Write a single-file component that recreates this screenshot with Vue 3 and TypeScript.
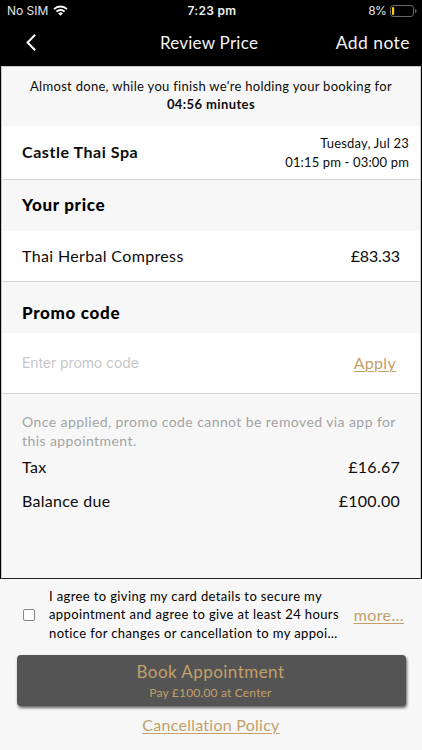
<script setup lang="ts">
import { ref } from 'vue'

interface Line {
  label: string
  amount: string
}

const service: Line = { label: 'Thai Herbal Compress', amount: '£83.33' }
const totals: Line[] = [
  { label: 'Tax', amount: '£16.67' },
  { label: 'Balance due', amount: '£100.00' },
]
const consent: string[] = [
  'I agree to giving my card details to secure my',
  'appointment and agree to give at least 24 hours',
  'notice for changes or cancellation to my appoi…',
]
const promo = ref('')
const agreed = ref(false)
</script>

<template>
  <div class="screen">
    <div class="status">
      <div class="carrier">
        <span>No SIM</span>
        <svg class="wifi" width="15" height="11" viewBox="0 0 15 11" fill="none" stroke="#fff">
          <path d="M1 4.1a9.3 9.3 0 0 1 13 0" stroke-width="2" />
          <path d="M3.4 6.6a5.9 5.9 0 0 1 8.2 0" stroke-width="1.9" />
          <path d="M7.5 10.7 5.2 8.4a3.3 3.3 0 0 1 4.6 0z" fill="#fff" stroke="none" />
        </svg>
      </div>
      <span class="clock">7:23 pm</span>
      <div class="power">
        <span>8%</span>
        <svg width="27" height="12" viewBox="0 0 27 12">
          <rect x="0.5" y="0.5" width="23" height="11" rx="2.6" fill="none" stroke="#68686a" />
          <rect x="2" y="2" width="2.2" height="8" rx="1" fill="#fdcb0a" />
          <path d="M25 4v4c1.1-.4 1.6-1.1 1.6-2S26.1 4.4 25 4z" fill="#68686a" />
        </svg>
      </div>
    </div>

    <header class="nav">
      <button class="back" aria-label="Back">
        <svg width="11" height="17" viewBox="0 0 11 17" fill="none" stroke="#fff" stroke-width="2">
          <path d="M9.1 .8 1.6 8.5l7.5 7.7" />
        </svg>
      </button>
      <h1 class="title">Review Price</h1>
      <button class="note">Add note</button>
    </header>

    <main class="content">
      <p class="hold">
        <span class="hold-text">Almost done, while you finish we're holding your booking for</span>
        <strong>04:56 minutes</strong>
      </p>

      <section class="row venue">
        <strong class="name">Castle Thai Spa</strong>
        <div class="when">
          <span class="day">Tuesday, Jul 23</span>
          <span class="time">01:15 pm - 03:00 pm</span>
        </div>
      </section>

      <h2 class="heading">Your price</h2>
      <section class="row item">
        <span>{{ service.label }}</span>
        <span class="amount tight">{{ service.amount }}</span>
      </section>

      <h2 class="heading promo-heading">Promo code</h2>
      <section class="row promo">
        <input v-model="promo" class="code" type="text" placeholder="Enter promo code" />
        <a class="link apply">Apply</a>
      </section>

      <section class="summary">
        <p class="hint">Once applied, promo code cannot be removed via app for<br />this appointment.</p>
        <div v-for="line in totals" :key="line.label" class="total">
          <span>{{ line.label }}</span>
          <span class="amount">{{ line.amount }}</span>
        </div>
      </section>
    </main>

    <footer class="footer">
      <div class="agree">
        <input v-model="agreed" class="check" type="checkbox" aria-label="Agree" />
        <p class="terms">
          <span v-for="text in consent" :key="text">{{ text }}</span>
        </p>
        <a class="link more">more...</a>
      </div>
      <button class="book">
        <span class="book-title">Book Appointment</span>
        <span class="book-sub">Pay £100.00 at Center</span>
      </button>
      <a class="link policy">Cancellation Policy</a>
    </footer>
  </div>
</template>

<style>
body {
  margin: 0;
  background: #000;
}
</style>

<style scoped>
* {
  box-sizing: border-box;
}
.screen {
  display: flex;
  flex-direction: column;
  width: 422px;
  height: 750px;
  overflow: hidden;
  background: #000;
  color: #0c0c0c;
  font-family: Lato, "Liberation Sans", sans-serif;
  font-size: 16px;
  white-space: nowrap;
}
h1,
h2,
p {
  margin: 0;
}
button {
  margin: 0;
  padding: 0;
  border: 0;
  background: none;
  font-family: inherit;
}
.status {
  display: grid;
  grid-template-columns: 1fr auto 1fr;
  align-items: center;
  height: 22px;
  padding: 0 5px 0 7px;
  color: #e4e4e4;
  font: 12px/22px Inter, sans-serif;
}
.carrier,
.power {
  display: flex;
  align-items: center;
}
.carrier {
  gap: 5px;
}
.wifi {
  margin-top: -1px;
}
.clock {
  color: #f2f2f2;
  font-weight: 600;
  letter-spacing: 0.3px;
}
.power {
  justify-content: flex-end;
  gap: 4px;
  letter-spacing: -0.7px;
}
.nav {
  display: grid;
  grid-template-columns: 1fr auto 1fr;
  align-items: center;
  height: 44px;
  padding: 0 12px 3px 26px;
}
.back {
  display: flex;
  justify-self: start;
}
.title {
  margin-right: 18px;
  color: #f4f4f4;
  font-size: 17px;
  font-weight: 400;
  letter-spacing: 0.25px;
}
.note {
  justify-self: end;
  color: #f4f4f4;
  font-size: 17.5px;
  letter-spacing: 0.45px;
}
.content {
  display: flex;
  flex-direction: column;
  height: 513px;
  margin: 0 1px;
  border: 1px solid #c9c9c9;
  border-bottom: 1px solid #222;
  background: #f7f7f7;
}
.hold {
  display: flex;
  flex-direction: column;
  align-items: center;
  height: 59px;
  padding-top: 10px;
  font-size: 13px;
  line-height: 18px;
}
.hold-text {
  letter-spacing: 0.3px;
}
.hold strong {
  letter-spacing: 0.4px;
}
.row {
  display: flex;
  align-items: center;
  justify-content: space-between;
  padding: 0 20px;
  border-bottom: 1px solid #d6d6d6;
  background: #fff;
}
.venue {
  height: 54px;
  padding-right: 11px;
}
.name {
  padding-bottom: 2px;
  font-size: 16px;
  letter-spacing: 0.55px;
}
.when {
  display: flex;
  flex-direction: column;
  align-items: flex-end;
  font-size: 13px;
  line-height: 19px;
  letter-spacing: 0.2px;
}
.time {
  letter-spacing: 0.15px;
}
.heading {
  height: 51px;
  padding-left: 20px;
  color: #000;
  font-size: 17px;
  font-weight: 900;
  line-height: 50px;
  letter-spacing: 0.68px;
}
.item {
  height: 51px;
  padding-bottom: 2px;
  letter-spacing: 0.35px;
}
.promo-heading {
  line-height: 62px;
}
.promo {
  height: 61px;
  padding-right: 24px;
}
.code {
  width: 200px;
  padding: 0;
  border: 0;
  outline: 0;
  background: none;
  font: 14px/20px Inter, sans-serif;
  letter-spacing: -0.09px;
}
.code::placeholder {
  color: #c6c6ca;
  opacity: 1;
}
.link {
  color: #c3a069;
  text-decoration: underline;
  text-decoration-thickness: 1px;
  text-underline-offset: 2px;
  letter-spacing: 0.3px;
}
.apply {
  padding-bottom: 2px;
}
.summary {
  padding: 18px 20px 0;
}
.hint {
  color: #a3a3a3;
  font-size: 14px;
  line-height: 19px;
  letter-spacing: 0.42px;
}
.total {
  display: flex;
  justify-content: space-between;
  line-height: 34px;
  letter-spacing: 0.3px;
}
.amount {
  letter-spacing: 0.25px;
}
.tight {
  letter-spacing: -0.15px;
}
.footer {
  display: flex;
  flex: 1;
  flex-direction: column;
  align-items: center;
  background: #f7f7f7;
}
.agree {
  display: flex;
  align-items: center;
  width: 100%;
  height: 71px;
  padding: 0 18px 0 23px;
}
.check {
  width: 12px;
  height: 12px;
  margin: 0 14px 0 0;
  border: 1px solid #868686;
  border-radius: 2px;
  background: #fff;
  appearance: none;
}
.terms {
  display: flex;
  flex: 1;
  flex-direction: column;
  color: #000;
  font-size: 13px;
  line-height: 18.2px;
  letter-spacing: 0.38px;
}
.more {
  padding-bottom: 1px;
  letter-spacing: 0.4px;
}
.book {
  display: flex;
  flex-direction: column;
  align-items: center;
  width: 389px;
  height: 51px;
  margin: 5px 0 0;
  padding: 6px 1px 0 0;
  border-radius: 4px;
  background: #545454;
  box-shadow: 1px 2px 3px rgba(0, 0, 0, 0.6);
  color: #c3a069;
}
.book-title {
  font-size: 17px;
  line-height: 22px;
  letter-spacing: 0.45px;
}
.book-sub {
  font-size: 12px;
  line-height: 19px;
  letter-spacing: 0.18px;
}
.policy {
  margin-top: 8px;
  line-height: 22px;
  letter-spacing: 0.26px;
}
</style>
